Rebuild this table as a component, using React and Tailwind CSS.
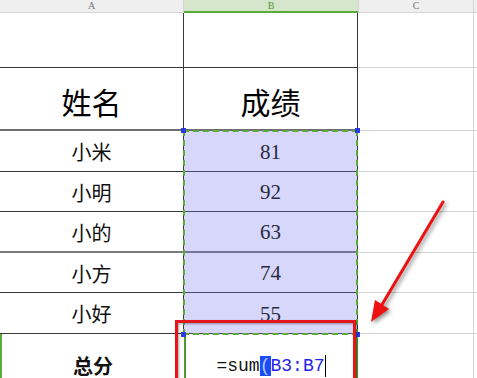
import React from 'react';

const names = [
  { name: '小米', score: 81 },
  { name: '小明', score: 92 },
  { name: '小的', score: 63 },
  { name: '小方', score: 74 },
  { name: '小好', score: 55 },
];

// row heights include the bottom border line
const rowH = ['h-[41px]', 'h-[40px]', 'h-[41px]', 'h-[40px]', 'h-[41px]'];
const rowLine = [
  'border-b border-[#3a3a3a]',
  'border-b border-[#3a3a3a]',
  'border-b-2 border-[#7a7a7a]',
  'border-b border-[#3a3a3a]',
  'border-b border-[#3a3a3a]',
];
const bLine = [
  'border-b border-[#4a4a6a]',
  'border-b border-[#4a4a6a]',
  'border-b-2 border-[#74749a]',
  'border-b border-[#4a4a6a]',
  'border-b border-[#4a4a6a]',
];

const Handle = ({ className }) => (
  <div className={`absolute w-[5px] h-[5px] bg-[#2b3be0] ${className}`} />
);

const App = () => {
  return (
    <div
      className="relative w-[477px] h-[378px] overflow-hidden bg-white"
      style={{ fontFamily: '"Noto Sans CJK SC", sans-serif' }}
    >
      {/* column header */}
      <div className="flex h-[13px] bg-[#efefef] text-[10px] leading-[12px] text-[#777]" style={{ fontFamily: '"Liberation Serif", serif' }}>
        <div className="w-[184px] border-b border-r border-[#d4d4d4] text-center">A</div>
        <div className="w-[174px] bg-[#d6e6cc] border-b-2 border-[#5aab38] text-center text-[#4c9a2a]">B</div>
        <div className="w-[116px] border-b border-r border-[#d4d4d4] border-l text-center">C</div>
        <div className="flex-1 border-b border-[#d4d4d4]" />
      </div>

      {/* row 1 */}
      <div className="flex h-[55px]">
        <div className="w-[184px] border-b border-r border-[#3a3a3a]" />
        <div className="w-[174px] border-b border-r border-[#3a3a3a]" />
        <div className="w-[116px] border-b border-r border-[#d4d4d4]" />
        <div className="flex-1 border-b border-[#d4d4d4]" />
      </div>

      {/* row 2 titles */}
      <div className="flex h-[63px] text-[30px] font-normal text-black">
        <div className="w-[184px] flex items-center justify-center border-b-2 border-r border-[#6e6e6e] border-r-[#3a3a3a] pt-[5px]">姓名</div>
        <div className="w-[174px] flex items-center justify-center border-b-2 border-r border-[#6e6e6e] border-r-[#3a3a3a] pt-[5px]">成绩</div>
        <div className="w-[116px] border-b border-r border-[#d4d4d4]" />
        <div className="flex-1 border-b border-[#d4d4d4]" />
      </div>

      {/* data rows */}
      {names.map((r, i) => (
        <div key={r.name} className={`flex ${rowH[i]}`}>
          <div className={`w-[184px] flex items-center justify-center text-[20px] text-[#111] border-r border-r-[#3a3a3a] pt-[2px] ${rowLine[i]}`}>
            {r.name}
          </div>
          <div
            className={`w-[174px] flex items-center justify-center bg-[#d7d7fb] text-[21px] text-[#2a2a40] border-r border-r-[#3a3a3a] pt-[3px] ${bLine[i]}`}
            style={{ fontFamily: '"Liberation Serif", serif' }}
          >
            {r.score}
          </div>
          <div className="w-[116px] border-b border-r border-[#d4d4d4]" />
          <div className="flex-1 border-b border-[#d4d4d4]" />
        </div>
      ))}

      {/* total row */}
      <div className="flex h-[64px]">
        <div className="w-[184px] flex items-center justify-center text-[20px] font-bold text-[#111] border-l-2 border-l-[#5aab38]">
          总分
        </div>
        <div className="w-[174px] flex items-center justify-center border-l-2 border-r-2 border-[#4f9a30]">
          <span className="text-[18px] text-[#111] leading-[24px]" style={{ fontFamily: '"Liberation Mono", monospace' }}>
            =sum<span className="bg-[#1a4df5] text-[#b8c8ff]">(</span>
            <span className="text-[#2222ee]">B3:B7</span>
            <span className="inline-block w-[1px] h-[22px] bg-black align-middle" />
          </span>
        </div>
        <div className="w-[116px] border-r border-[#d4d4d4]" />
        <div className="flex-1" />
      </div>

      {/* selection B3:B7 */}
      <div className="absolute left-[183px] top-[130px] w-[175px] h-[205px] border-2 border-dashed border-[#5aab38]" />
      <Handle className="left-[181px] top-[128px]" />
      <Handle className="left-[355px] top-[128px]" />
      <Handle className="left-[181px] top-[332px]" />
      <Handle className="left-[355px] top-[332px]" />

      {/* red highlight box */}
      <div
        className="absolute left-[175px] top-[320px] w-[181px] h-[80px] border-[3px] border-[#e4161b]"
        style={{ filter: 'drop-shadow(1px 1px 1px rgba(0,0,0,0.35))' }}
      />

      {/* arrow */}
      <svg
        className="absolute left-0 top-0"
        width="477"
        height="378"
        style={{ filter: 'drop-shadow(2px 2px 2px rgba(0,0,0,0.45))' }}
      >
        <line x1="443" y1="202" x2="380" y2="308" stroke="#ee1111" strokeWidth="3" strokeLinecap="round" />
        <polygon points="371,322 375,300 389,309" fill="#ee1111" />
      </svg>
    </div>
  );
};

export default App;
